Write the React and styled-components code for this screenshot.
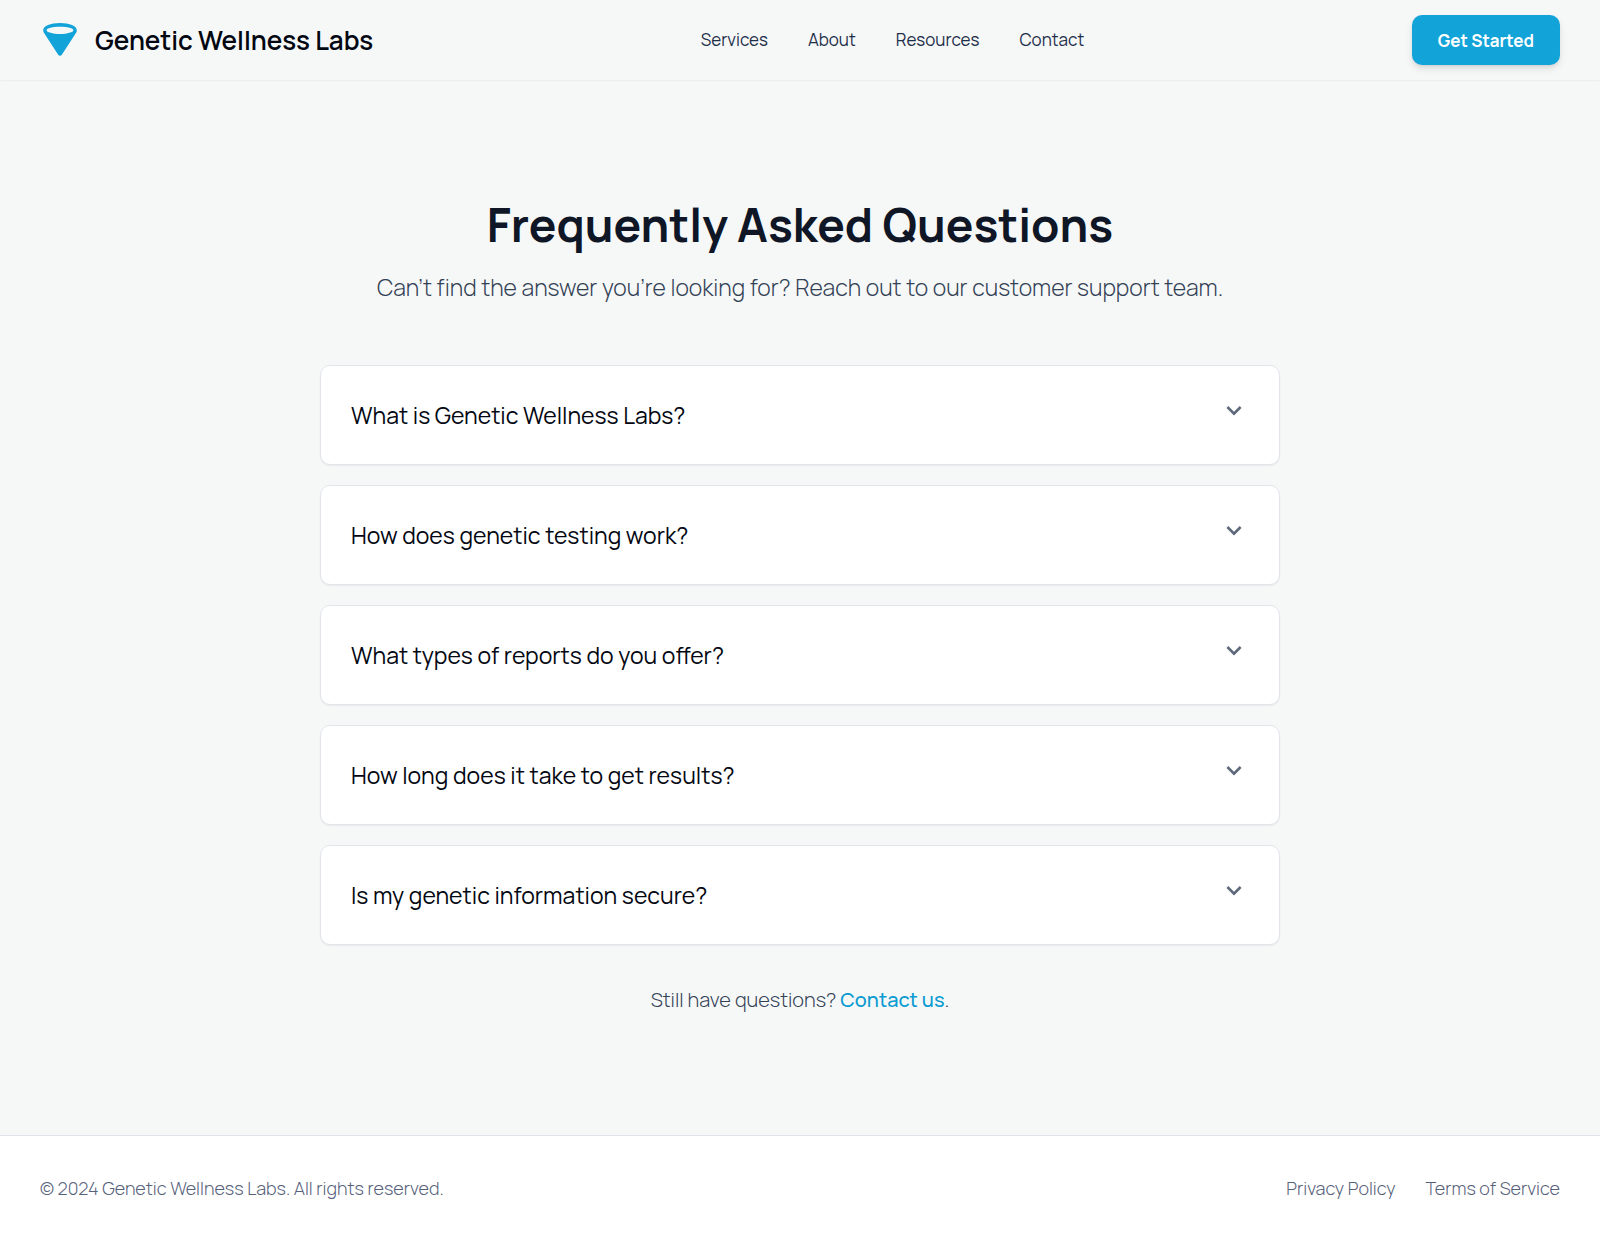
import React, { useState } from "react";
import styled, { createGlobalStyle } from "styled-components";

const GlobalStyle = createGlobalStyle`
  *, *::before, *::after { box-sizing: border-box; }
  body {
    margin: 0;
    background: #f6f8f8;
    color: #030712;
    font-family: Manrope, Inter, "Liberation Sans", sans-serif;
  }
`;

const Page = styled.div`
  min-height: 100vh;
  display: flex;
  flex-direction: column;
`;

const Header = styled.header`
  display: flex;
  align-items: center;
  justify-content: space-between;
  min-height: 80px;
  padding: 15px 40px;
  box-shadow: 0 1px 2px rgba(0, 0, 0, 0.05);
`;

const Brand = styled.a`
  display: flex;
  align-items: center;
  gap: 15px;
  color: #030712;
  text-decoration: none;
  font-size: 26px;
  font-weight: 600;
  line-height: 34px;
`;

const Logo = styled.svg`
  width: 40px;
  height: 40px;
  color: #12a3d8;
`;

const Nav = styled.nav`
  display: flex;
  gap: 40px;
`;

const NavLink = styled.a`
  color: #1e2f4a;
  text-decoration: none;
  font-size: 17px;
  line-height: 24px;
`;

const PrimaryButton = styled.button`
  height: 50px;
  padding: 0 26px;
  border: 0;
  border-radius: 10px;
  background: #12a3d8;
  color: #fff;
  font: inherit;
  font-size: 17px;
  font-weight: 700;
  box-shadow: 0 4px 8px -1px rgba(0, 0, 0, 0.12), 0 2px 4px -2px rgba(0, 0, 0, 0.12);
  cursor: pointer;
`;

const Main = styled.main`
  flex: 1;
  width: 100%;
  max-width: 1040px;
  margin: 0 auto;
  padding: 120px 40px;
`;

const Title = styled.h1`
  margin: 0 0 20px;
  color: #0f1626;
  font-size: 46px;
  font-weight: 700;
  line-height: 50px;
  text-align: center;
`;

const Subtitle = styled.p`
  margin: 0 0 60px;
  color: #334155;
  font-size: 23px;
  font-weight: 300;
  line-height: 35px;
  text-align: center;
`;

const List = styled.div`
  display: flex;
  flex-direction: column;
  gap: 20px;
`;

const Card = styled.section`
  border: 1px solid #e2e5ea;
  border-radius: 10px;
  background: #fff;
  box-shadow: 0 1px 2px rgba(0, 0, 0, 0.06);
`;

const Heading = styled.h2`
  margin: 0;
  font-size: 23px;
  font-weight: 400;
`;

const Question = styled.button`
  display: flex;
  align-items: flex-start;
  justify-content: space-between;
  width: 100%;
  padding: 30px;
  border: 0;
  background: none;
  color: #030712;
  font: inherit;
  line-height: 38px;
  text-align: left;
  cursor: pointer;
`;

const Chevron = styled.svg`
  flex: none;
  width: 30px;
  height: 30px;
  color: #5f697c;
  transform: ${({ $open }) => ($open ? "rotate(180deg)" : "none")};
`;

const Answer = styled.p`
  margin: 0;
  padding: 0 30px 30px;
  color: #334155;
  font-size: 20px;
  line-height: 30px;
`;

const Closing = styled.p`
  margin: 40px 0 0;
  color: #334155;
  font-size: 20px;
  font-weight: 300;
  line-height: 30px;
  text-align: center;
`;

const InlineLink = styled.a`
  color: #0c9bd2;
  font-weight: 500;
  text-decoration: none;
`;

const Footer = styled.footer`
  display: flex;
  align-items: center;
  justify-content: space-between;
  padding: 40px;
  border-top: 1px solid #dfe3e9;
  background: #fff;
  color: #56617a;
  font-size: 18px;
  font-weight: 300;
  line-height: 25px;
`;

const FooterLinks = styled.nav`
  display: flex;
  gap: 30px;
`;

const FooterLink = styled.a`
  color: inherit;
  text-decoration: none;
`;

const FAQS = [
  ["What is Genetic Wellness Labs?", "We turn genetic insights into practical wellness guidance."],
  ["How does genetic testing work?", "You send us a saliva sample and our laboratory analyses it."],
  ["What types of reports do you offer?", "Nutrition, fitness, sleep and general wellness reports."],
  ["How long does it take to get results?", "Most results are ready within a few weeks."],
  ["Is my genetic information secure?", "Your data is encrypted and never shared without consent."],
];

function FaqItem({ question, answer }) {
  const [open, setOpen] = useState(false);
  return (
    <Card>
      <Heading>
        <Question type="button" aria-expanded={open} onClick={() => setOpen(!open)}>
          {question}
          <Chevron $open={open} viewBox="0 0 24 24" fill="currentColor" aria-hidden="true">
            <path d="M16.59 8.09 12 12.67 7.41 8.09 6 9.500l6 6 6-6z" />
          </Chevron>
        </Question>
      </Heading>
      {open && <Answer>{answer}</Answer>}
    </Card>
  );
}

export default function App() {
  return (
    <Page>
      <GlobalStyle />
      <Header>
        <Brand href="#">
          <Logo viewBox="0 0 40 40" aria-hidden="true">
            <path
              fill="currentColor"
              fillRule="evenodd"
              d="M20 3C10.500 3 3.200 6 3.200 10.200c0 1.300.5 2.300 1.200 3.400L18 34.500c1 1.600 3 1.600 4 0l13.600-20.900c.7-1.100 1.200-2.100 1.200-3.400C36.800 6 29.500 3 20 3Zm0 3.800c7.500 0 13.400 1.500 13.400 3.500S27.500 14 20 14 6.600 12.300 6.600 10.300 12.500 6.800 20 6.800Z"
            />
          </Logo>
          Genetic Wellness Labs
        </Brand>
        <Nav>
          <NavLink href="#services">Services</NavLink>
          <NavLink href="#about">About</NavLink>
          <NavLink href="#resources">Resources</NavLink>
          <NavLink href="#contact">Contact</NavLink>
        </Nav>
        <PrimaryButton type="button">Get Started</PrimaryButton>
      </Header>
      <Main>
        <Title>Frequently Asked Questions</Title>
        <Subtitle>Can’t find the answer you’re looking for? Reach out to our customer support team.</Subtitle>
        <List>
          {FAQS.map(([question, answer]) => (
            <FaqItem key={question} question={question} answer={answer} />
          ))}
        </List>
        <Closing>
          Still have questions? <InlineLink href="#contact">Contact us</InlineLink>.
        </Closing>
      </Main>
      <Footer>
        <span>© 2024 Genetic Wellness Labs. All rights reserved.</span>
        <FooterLinks>
          <FooterLink href="#privacy">Privacy Policy</FooterLink>
          <FooterLink href="#terms">Terms of Service</FooterLink>
        </FooterLinks>
      </Footer>
    </Page>
  );
}
